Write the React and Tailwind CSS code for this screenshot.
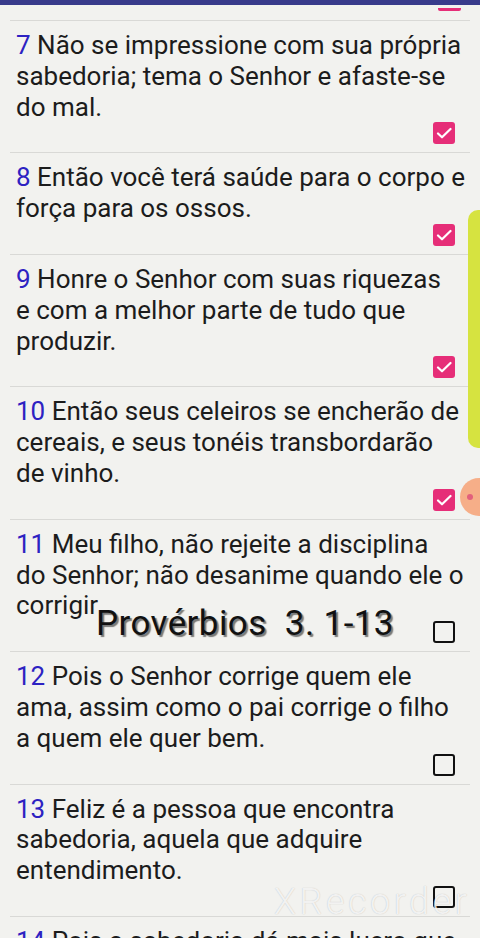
import React from "react";

const verses = [
  { n: 7, lines: ["Não se impressione com sua própria", "sabedoria; tema o Senhor e afaste-se", "do mal."], done: true },
  { n: 8, lines: ["Então você terá saúde para o corpo e", "força para os ossos."], done: true },
  { n: 9, lines: ["Honre o Senhor com suas riquezas", "e com a melhor parte de tudo que", "produzir."], done: true },
  { n: 10, lines: ["Então seus celeiros se encherão de", "cereais, e seus tonéis transbordarão", "de vinho."], done: true },
  { n: 11, lines: ["Meu filho, não rejeite a disciplina", "do Senhor; não desanime quando ele o", "corrigir"], done: false },
  { n: 12, lines: ["Pois o Senhor corrige quem ele", "ama, assim como o pai corrige o filho", "a quem ele quer bem."], done: false },
  { n: 13, lines: ["Feliz é a pessoa que encontra", "sabedoria, aquela que adquire", "entendimento."], done: false },
  { n: 14, lines: ["Pois a sabedoria dá mais lucro que", "a prata e rende mais que o ouro."], done: false },
];

function Check({ done }) {
  if (done) {
    return (
      <div className="w-[22px] h-[22px] rounded-[3px] bg-[#e62e78] flex items-center justify-center">
        <svg width="16" height="12" viewBox="0 0 16 12" fill="none">
          <path d="M2 6.5l4 3.8L14.5 2" stroke="white" strokeWidth="2.2" strokeLinecap="round" strokeLinejoin="round" />
        </svg>
      </div>
    );
  }
  return <div className="w-[22px] h-[22px] rounded-[3px] border-[2.5px] border-[#111]" />;
}

function Verse({ v }) {
  return (
    <div className="border-t border-[#d9d9d6] px-[6px] pt-[9px] pb-[8px]">
      <p className="text-[26px] leading-[30.8px] text-[#1c1c1c] whitespace-nowrap">
        {v.lines.map((line, i) => (
          <span key={i} className="block">
            {i === 0 && <span className="text-[#2d22c2]">{v.n} </span>}
            {line}
          </span>
        ))}
      </p>
      <div className="flex justify-end pr-[9px]">
        <Check done={v.done} />
      </div>
    </div>
  );
}

export default function App() {
  return (
    <div className="relative w-[480px] h-[938px] overflow-hidden bg-[#f2f2ef]" style={{ fontFamily: "Roboto, 'Noto Sans', sans-serif" }}>
      <div className="h-[5px] bg-[#393b8b]" />
      <div className="h-[15px] flex justify-end pr-[19px]">
        <div className="mt-[3px] w-[23px] h-[3px] rounded-b-[2px] bg-[#e62e78]" />
      </div>
      <div className="mx-[10px]">
        {verses.map((v) => (
          <Verse key={v.n} v={v} />
        ))}
      </div>

      {/* screen recorder overlays */}
      <div className="absolute right-0 top-[210px] w-[12px] h-[238px] rounded-l-[10px] bg-[#d6e340]" />
      <div className="absolute left-[460px] top-[478px] w-[38px] h-[38px] rounded-full bg-[#f6a67c] opacity-90" />
      <div className="absolute left-[467px] top-[494px] w-[6px] h-[6px] rounded-full bg-[#e2607c]" />

      <div
        className="absolute left-[96px] top-[604px] text-[35px] leading-[40px] tracking-[0.4px] text-[#111] whitespace-pre"
        style={{ textShadow: "2px 2px 1px rgba(0,0,0,0.5)" }}
      >
        Provérbios  3. 1-13
      </div>

      <div
        className="absolute left-[274px] top-[882px] text-[36px] leading-[40px] font-light text-white/80 tracking-[3.5px]"
        style={{ textShadow: "0 0 1px rgba(0,0,0,0.25)" }}
      >
        XRecorder
      </div>
    </div>
  );
}
